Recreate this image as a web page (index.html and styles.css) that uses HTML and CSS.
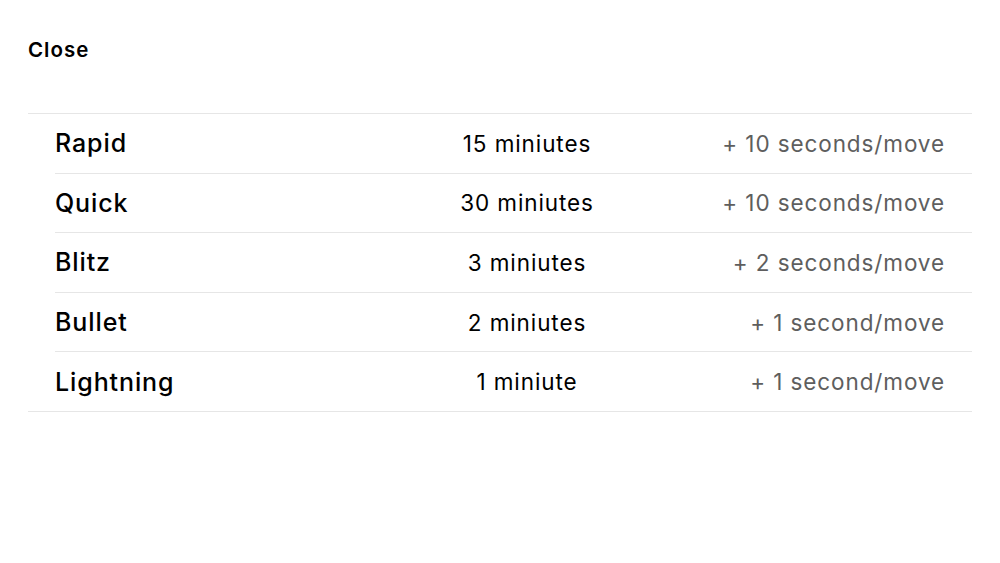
FILE: index.html
```html
<!DOCTYPE html>
<html>
<head>
<meta charset="utf-8">
<link rel="stylesheet" href="styles.css">
</head>
<body>
<div class="page">
  <div class="topbar"><span class="close">Close</span></div>
  <div class="list">
    <div class="row"><div class="name">Rapid</div><div class="time">15 miniutes</div><div class="inc">+ 10 seconds/move</div></div>
    <div class="row"><div class="name">Quick</div><div class="time">30 miniutes</div><div class="inc">+ 10 seconds/move</div></div>
    <div class="row"><div class="name">Blitz</div><div class="time">3 miniutes</div><div class="inc">+ 2 seconds/move</div></div>
    <div class="row"><div class="name">Bullet</div><div class="time">2 miniutes</div><div class="inc">+ 1 second/move</div></div>
    <div class="row"><div class="name">Lightning</div><div class="time">1 miniute</div><div class="inc">+ 1 second/move</div></div>
  </div>
</div>
</body>
</html>
```
FILE: styles.css
```css
html, body {
  margin: 0;
  padding: 0;
  background: #ffffff;
}
body {
  font-family: Inter, "Noto Sans", "Liberation Sans", sans-serif;
  color: #000;
}
.page {
  padding: 0 28px;
}
.topbar {
  height: 113px;
  box-sizing: border-box;
  padding-top: 37px;
}
.close {
  font-size: 20.5px;
  font-weight: 600;
  line-height: 26px;
  letter-spacing: 1px;
}
.list {
  border-top: 1px solid #e6e6e6;
  border-bottom: 1px solid #e6e6e6;
}
.row {
  display: grid;
  grid-template-columns: 372px 200px 1fr;
  align-items: center;
  height: 58.6px;
  margin-left: 27px;
  padding-right: 27px;
}
.row + .row {
  border-top: 1px solid #e6e6e6;
}
.name {
  font-size: 25px;
  font-weight: 500;
  letter-spacing: 0.9px;
}
.time {
  font-size: 22.5px;
  text-align: center;
  letter-spacing: 0.9px;
}
.inc {
  font-size: 22.5px;
  color: #5e5e5e;
  text-align: right;
  letter-spacing: 0.9px;
}
```
